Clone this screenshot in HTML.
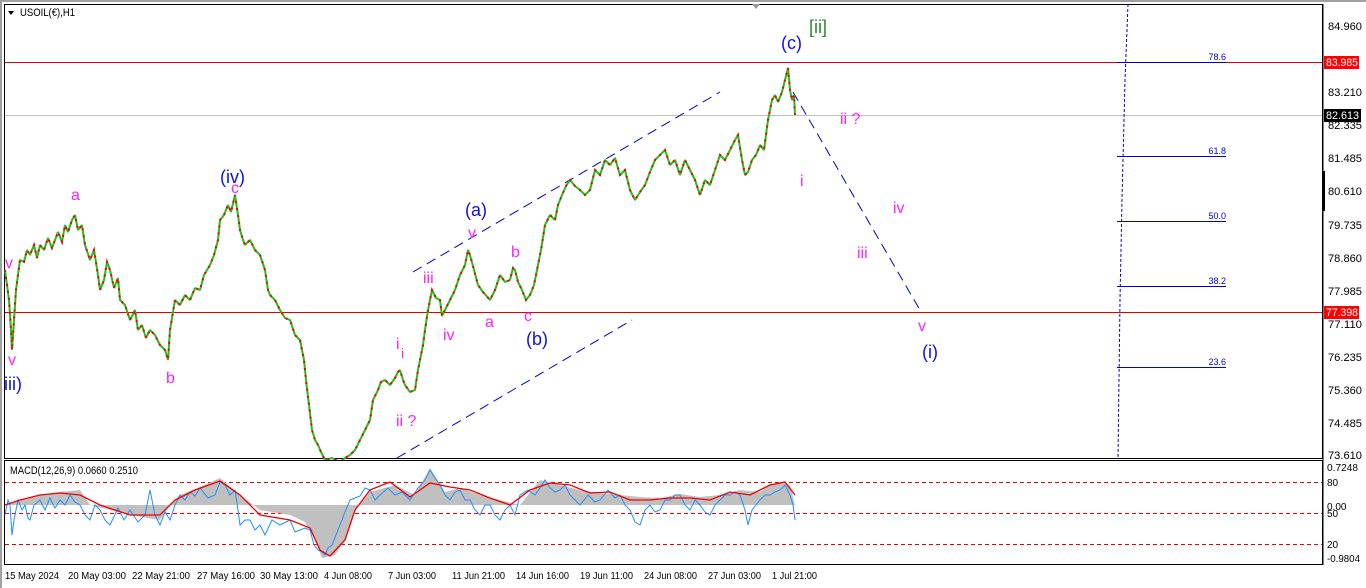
<!DOCTYPE html>
<html><head><meta charset="utf-8"><style>
html,body{margin:0;padding:0;background:#fff;}
svg{display:block;font-family:"Liberation Sans",sans-serif;}
</style></head><body>
<svg width="1366" height="588" xmlns="http://www.w3.org/2000/svg">
<rect x="0" y="0" width="1366" height="588" fill="#fff"/>
<rect x="0" y="0" width="1366" height="2" fill="#a0a0a0"/>
<rect x="0" y="0" width="2" height="588" fill="#a0a0a0"/>
<rect x="4.5" y="4.5" width="1318" height="454" fill="#fff" stroke="#000"/>
<path d="M752 4 L760 4 L756 9 Z" fill="#999"/>
<path d="M8 11 L14 11 L11 15 Z" fill="#000"/>
<text x="20" y="16" font-size="11" fill="#000" textLength="55" lengthAdjust="spacingAndGlyphs">USOIL(€),H1</text>
<line x1="5" y1="62.5" x2="1322" y2="62.5" stroke="#e00000"/>
<line x1="5" y1="115.5" x2="1322" y2="115.5" stroke="#c0c0c0"/>
<line x1="5" y1="312.5" x2="1322" y2="312.5" stroke="#e00000"/>
<g stroke="#0000d0"><line x1="1117" y1="62.5" x2="1226" y2="62.5"/><line x1="1117" y1="156.5" x2="1226" y2="156.5"/><line x1="1117" y1="221.5" x2="1226" y2="221.5"/><line x1="1117" y1="286.5" x2="1226" y2="286.5"/><line x1="1117" y1="367.5" x2="1226" y2="367.5"/></g>
<g font-size="9" fill="#0000d0" text-anchor="end"><text x="1226" y="60">78.6</text><text x="1226" y="154">61.8</text><text x="1226" y="219">50.0</text><text x="1226" y="284">38.2</text><text x="1226" y="365">23.6</text></g>
<path d="M1128 4 L1127 30 L1125 80 L1122 200 L1120 300 L1118 458" stroke="#0000d0" fill="none" stroke-dasharray="3,2"/>
<g stroke="#0000d0" fill="none" stroke-dasharray="10,6"><line x1="413" y1="272" x2="720" y2="92"/><line x1="397" y1="458" x2="632" y2="320"/><line x1="793" y1="92" x2="920" y2="310"/></g>
<g id="pr">
<polyline fill="none" stroke="#20c020" stroke-width="2" stroke-linejoin="bevel" points="5,270 7,285 9,300 11,330 12,350 14,320 16,290 18,275 20,260 24,262 27,250 30,255 34,245 37,258 40,245 44,250 48,238 52,248 55,240 58,232 62,242 65,225 68,232 72,220 75,215 78,230 82,225 85,245 90,260 94,250 98,275 100,290 104,280 107,262 110,270 114,288 118,278 120,300 125,305 130,320 135,310 138,330 142,325 146,338 150,330 155,335 160,345 165,350 168,360 170,330 172,318 175,300 180,305 185,295 190,300 195,288 200,290 204,275 207,270 210,265 214,255 218,240 220,220 224,215 228,205 231,212 235,195 238,215 240,230 243,240 245,245 250,240 255,250 260,255 265,270 268,290 270,295 275,300 280,310 285,318 290,320 295,335 300,340 304,360 306,380 309,405 312,430 315,440 318,445 321,452 325,460 332,458 340,462 345,458 350,455 355,450 360,440 364,432 370,420 373,400 378,390 381,382 385,380 390,385 395,378 398,372 400,370 403,380 405,385 410,392 415,390 418,370 420,360 423,345 425,330 428,310 432,290 436,298 440,300 442,316 445,310 450,300 455,290 460,275 465,265 468,250 470,255 474,270 478,285 483,292 490,300 495,290 500,275 505,282 510,280 513,268 515,270 518,282 522,290 526,300 530,295 534,285 538,265 541,250 545,225 550,215 555,220 558,205 562,195 566,186 570,180 575,186 580,190 585,195 590,190 595,170 600,175 605,160 610,165 615,158 620,175 625,170 630,190 635,200 640,192 645,185 650,172 655,160 660,155 665,150 670,165 675,160 680,175 685,160 690,170 695,180 700,195 705,180 710,185 715,170 720,155 725,160 730,150 735,140 738,135 742,160 745,175 748,172 752,160 756,155 760,145 764,150 768,120 772,100 775,95 778,102 782,92 785,80 788,68 790,90 792,100 794,95 795,115"/>
<polyline fill="none" stroke="#f00000" stroke-width="2" stroke-dasharray="2,5" points="5,270 7,285 9,300 11,330 12,350 14,320 16,290 18,275 20,260 24,262 27,250 30,255 34,245 37,258 40,245 44,250 48,238 52,248 55,240 58,232 62,242 65,225 68,232 72,220 75,215 78,230 82,225 85,245 90,260 94,250 98,275 100,290 104,280 107,262 110,270 114,288 118,278 120,300 125,305 130,320 135,310 138,330 142,325 146,338 150,330 155,335 160,345 165,350 168,360 170,330 172,318 175,300 180,305 185,295 190,300 195,288 200,290 204,275 207,270 210,265 214,255 218,240 220,220 224,215 228,205 231,212 235,195 238,215 240,230 243,240 245,245 250,240 255,250 260,255 265,270 268,290 270,295 275,300 280,310 285,318 290,320 295,335 300,340 304,360 306,380 309,405 312,430 315,440 318,445 321,452 325,460 332,458 340,462 345,458 350,455 355,450 360,440 364,432 370,420 373,400 378,390 381,382 385,380 390,385 395,378 398,372 400,370 403,380 405,385 410,392 415,390 418,370 420,360 423,345 425,330 428,310 432,290 436,298 440,300 442,316 445,310 450,300 455,290 460,275 465,265 468,250 470,255 474,270 478,285 483,292 490,300 495,290 500,275 505,282 510,280 513,268 515,270 518,282 522,290 526,300 530,295 534,285 538,265 541,250 545,225 550,215 555,220 558,205 562,195 566,186 570,180 575,186 580,190 585,195 590,190 595,170 600,175 605,160 610,165 615,158 620,175 625,170 630,190 635,200 640,192 645,185 650,172 655,160 660,155 665,150 670,165 675,160 680,175 685,160 690,170 695,180 700,195 705,180 710,185 715,170 720,155 725,160 730,150 735,140 738,135 742,160 745,175 748,172 752,160 756,155 760,145 764,150 768,120 772,100 775,95 778,102 782,92 785,80 788,68 790,90 792,100 794,95 795,115"/>
</g>
<g font-size="16" fill="#ff20ff">
<text x="5" y="268">v</text><text x="8" y="365">v</text><text x="71" y="200">a</text><text x="166" y="383">b</text><text x="231" y="193">c</text>
<text x="423" y="283">iii</text><text x="396" y="349">i</text><text x="401" y="358" font-size="14">i</text><text x="396" y="426">ii ?</text><text x="443" y="340">iv</text>
<text x="468" y="238">v</text><text x="485" y="327">a</text><text x="511" y="257">b</text><text x="524" y="321">c</text>
<text x="800" y="186">i</text><text x="840" y="124">ii ?</text><text x="857" y="258">iii</text><text x="893" y="213">iv</text><text x="918" y="331">v</text>
</g>
<g font-size="18" fill="#1010e0">
<text x="4" y="390">iii)</text><text x="220" y="183">(iv)</text><text x="465" y="216">(a)</text><text x="526" y="345">(b)</text><text x="781" y="49">(c)</text><text x="922" y="358">(i)</text>
</g>
<text x="809" y="33" font-size="18" fill="#2a8a2a">[ii]</text>
<line x1="1323" y1="4" x2="1323" y2="565" stroke="#000"/>
<g font-size="11" fill="#000">
<text x="1328" y="30" textLength="34" lengthAdjust="spacingAndGlyphs">84.960</text><text x="1328" y="96" textLength="34" lengthAdjust="spacingAndGlyphs">83.210</text><text x="1328" y="129" textLength="34" lengthAdjust="spacingAndGlyphs">82.335</text><text x="1328" y="162" textLength="34" lengthAdjust="spacingAndGlyphs">81.485</text><text x="1328" y="195" textLength="34" lengthAdjust="spacingAndGlyphs">80.610</text><text x="1328" y="229" textLength="34" lengthAdjust="spacingAndGlyphs">79.735</text><text x="1328" y="262" textLength="34" lengthAdjust="spacingAndGlyphs">78.860</text><text x="1328" y="295" textLength="34" lengthAdjust="spacingAndGlyphs">77.985</text><text x="1328" y="328" textLength="34" lengthAdjust="spacingAndGlyphs">77.110</text><text x="1328" y="361" textLength="34" lengthAdjust="spacingAndGlyphs">76.235</text><text x="1328" y="394" textLength="34" lengthAdjust="spacingAndGlyphs">75.360</text><text x="1328" y="427" textLength="34" lengthAdjust="spacingAndGlyphs">74.485</text><text x="1328" y="459" textLength="34" lengthAdjust="spacingAndGlyphs">73.610</text>
</g>
<rect x="1324" y="56" width="35" height="13" fill="#ff0000"/><text x="1326" y="66" font-size="11" fill="#fff" textLength="32" lengthAdjust="spacingAndGlyphs">83.985</text>
<rect x="1324" y="109" width="37" height="13" fill="#000"/><text x="1326" y="119" font-size="11" fill="#fff" textLength="33" lengthAdjust="spacingAndGlyphs">82.613</text>
<rect x="1324" y="306" width="35" height="13" fill="#ff0000"/><text x="1326" y="316" font-size="11" fill="#fff" textLength="32" lengthAdjust="spacingAndGlyphs">77.398</text>
<rect x="1322" y="171" width="3" height="40" fill="#000"/>
<rect x="4.5" y="460.5" width="1318" height="104" fill="#fff" stroke="#000"/>
<text x="10" y="474" font-size="11" fill="#000" textLength="128" lengthAdjust="spacingAndGlyphs">MACD(12,26,9) 0.0660 0.2510</text>
<g stroke="#f00000" stroke-dasharray="4,3"><line x1="5" y1="482.5" x2="1322" y2="482.5"/><line x1="5" y1="513.5" x2="1322" y2="513.5"/><line x1="5" y1="544.5" x2="1322" y2="544.5"/></g>
<path fill="#c0c0c0" d="M5 505 L20 500 L40 495 L60 492 L80 490 L90 505 L110 510 L130 515 L160 520 L170 505 L180 495 L200 487 L220 478 L240 495 L260 510 L290 515 L305 522 L315 540 L322 558 L335 555 L345 540 L355 510 L370 492 L395 485 L415 495 L430 468 L445 492 L460 488 L480 495 L500 500 L520 505 L540 480 L560 485 L580 490 L600 493 L620 495 L640 497 L660 498 L680 494 L700 497 L720 495 L740 490 L760 492 L770 485 L780 482 L790 485 L795 505 L5 505 Z"/>
<polyline fill="none" stroke="#1e90ff" stroke-width="1" points="5,515 8,500 10,505 12,535 14,520 18,500 22,510 25,505 28,518 30,520 34,505 40,500 45,510 50,498 55,508 60,500 65,505 70,495 75,502 80,505 85,515 90,520 95,505 100,510 105,520 110,525 118,508 124,520 130,510 138,522 145,515 148,500 150,490 155,515 160,525 165,512 170,520 175,505 180,495 185,500 190,492 195,496 200,488 208,498 215,495 220,482 225,485 230,495 235,490 238,510 240,525 245,520 250,520 255,530 260,525 265,535 272,520 280,525 290,520 295,532 300,530 305,528 310,530 314,545 318,550 322,552 325,555 328,548 332,545 336,535 340,525 345,512 350,500 355,498 360,496 365,488 370,490 375,500 380,495 388,488 395,495 402,492 410,500 418,488 425,480 430,470 435,478 440,485 445,495 450,500 455,492 460,490 465,500 470,500 475,510 480,515 485,505 490,505 495,515 500,520 505,510 510,505 515,515 520,495 528,490 535,495 540,488 545,480 550,488 555,492 560,490 565,485 570,495 575,500 580,505 588,495 595,502 600,500 608,490 615,498 620,495 625,505 630,510 635,522 640,525 645,510 650,505 655,512 660,510 665,500 670,500 675,495 680,495 685,505 690,510 695,500 700,505 705,512 710,515 715,505 720,500 725,495 730,495 735,492 740,495 745,510 748,525 752,510 756,505 760,500 765,495 770,495 775,492 780,490 785,485 790,495 793,505 795,520"/>
<polyline fill="none" stroke="#f00000" stroke-width="1.3" points="5,505 20,500 40,495 60,493 80,495 100,505 130,515 160,515 175,500 195,490 220,481 240,495 260,515 290,520 310,528 320,550 330,556 345,540 355,510 370,490 390,482 410,497 430,483 450,487 470,490 490,498 510,505 530,490 550,483 570,485 590,493 610,492 630,500 650,500 670,498 690,498 710,500 730,492 750,495 770,485 785,482 795,495"/>
<g font-size="10" fill="#000">
<text x="1327" y="471" textLength="31" lengthAdjust="spacingAndGlyphs">0.7248</text><text x="1327" y="486">80</text><text x="1327" y="510">0.00</text><text x="1327" y="517">50</text><text x="1327" y="548">20</text><text x="1327" y="562" textLength="33" lengthAdjust="spacingAndGlyphs">-0.9804</text>
</g>
<g font-size="10" fill="#000" lengthAdjust="spacingAndGlyphs">
<text x="5" y="579" textLength="54" lengthAdjust="spacingAndGlyphs">15 May 2024</text><text x="68" y="579" textLength="58" lengthAdjust="spacingAndGlyphs">20 May 03:00</text><text x="132" y="579" textLength="58" lengthAdjust="spacingAndGlyphs">22 May 21:00</text><text x="197" y="579" textLength="58" lengthAdjust="spacingAndGlyphs">27 May 16:00</text><text x="260" y="579" textLength="58" lengthAdjust="spacingAndGlyphs">30 May 13:00</text><text x="324" y="579" textLength="48" lengthAdjust="spacingAndGlyphs">4 Jun 08:00</text><text x="388" y="579" textLength="48" lengthAdjust="spacingAndGlyphs">7 Jun 03:00</text><text x="452" y="579" textLength="53" lengthAdjust="spacingAndGlyphs">11 Jun 21:00</text><text x="516" y="579" textLength="53" lengthAdjust="spacingAndGlyphs">14 Jun 16:00</text><text x="580" y="579" textLength="53" lengthAdjust="spacingAndGlyphs">19 Jun 11:00</text><text x="644" y="579" textLength="53" lengthAdjust="spacingAndGlyphs">24 Jun 08:00</text><text x="708" y="579" textLength="53" lengthAdjust="spacingAndGlyphs">27 Jun 03:00</text><text x="772" y="579" textLength="45" lengthAdjust="spacingAndGlyphs">1 Jul 21:00</text>
</g>
</svg>
</body></html>
